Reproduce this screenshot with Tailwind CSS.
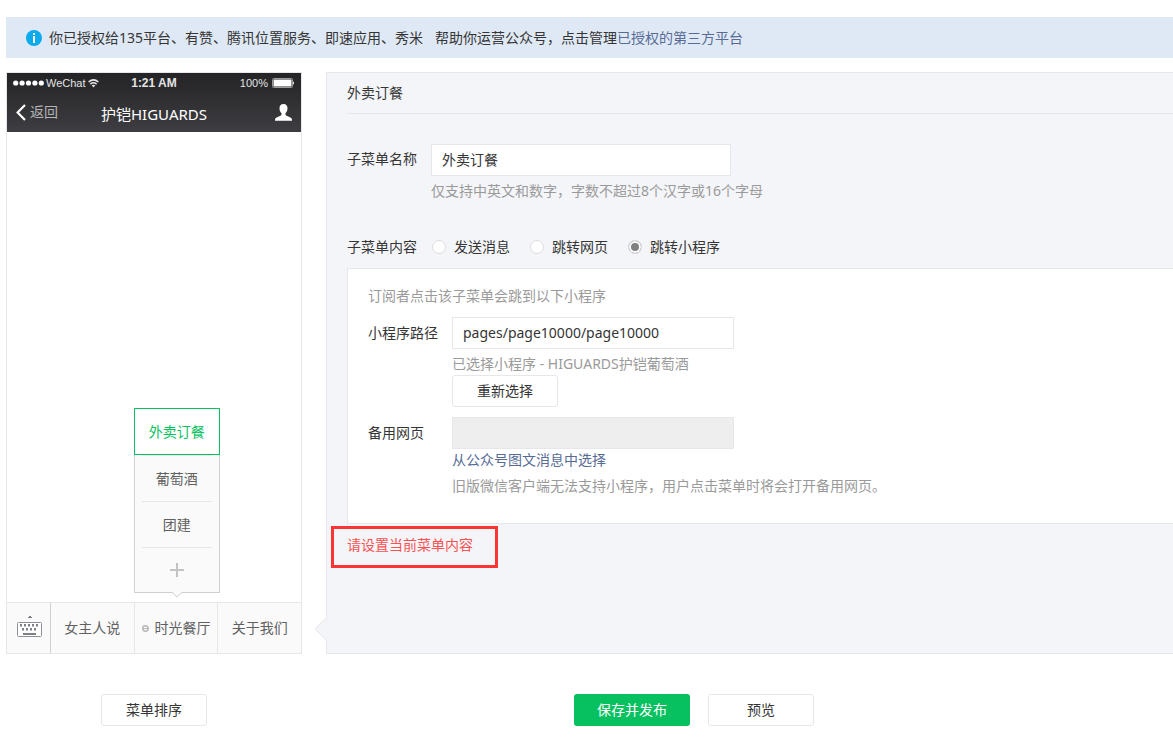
<!DOCTYPE html>
<html lang="zh-CN">
<head>
<meta charset="utf-8">
<meta name="viewport" content="width=device-width, initial-scale=1">
<title>自定义菜单</title>
<script src="https://cdn.jsdelivr.net/npm/@tailwindcss/browser@4"></script>
</head>
<body class="bg-white pt-[17px] pb-3 pl-1.5 overflow-x-hidden font-['Noto_Sans','Noto_Sans_CJK_SC',sans-serif] text-sm leading-5 text-[#353535]">

<div class="flex items-center bg-[#dfe9f5] h-[41px] pl-5 whitespace-nowrap">
  <svg class="size-4 shrink-0 mr-[7px]" viewBox="0 0 16 16" aria-hidden="true"><circle cx="8" cy="8" r="8" fill="#0cabee"/><path d="M7 3h2v2H7zM7 6h2v7H7z" fill="#fff"/></svg>
  <p>你已授权给135平台、有赞、腾讯位置服务、即速应用、秀米<span class="ml-3">帮助你运营公众号，点击管理</span><a href="#" class="text-[#576b95]">已授权的第三方平台</a></p>
</div>

<main class="mt-3.5 flex items-stretch min-h-[582px]">
  <!-- Phone preview -->
  <section class="w-[296px] shrink-0 flex flex-col border border-[#e7e7eb]">
    <header class="h-[59px] shrink-0 bg-linear-to-b from-[#242426] to-[#3e3e42] text-white">
      <div class="grid grid-cols-3 items-center h-5 px-1.5 text-[11px] leading-5 text-[#e4e4e4] font-['Liberation_Sans',sans-serif]">
        <div class="flex items-center gap-0.5">
          <svg class="w-[31px] h-[6px]" viewBox="0 0 31 6" fill="#fff" aria-hidden="true"><circle cx="2.700" cy="3" r="2.600"/><circle cx="9.100" cy="3" r="2.600"/><circle cx="15.500" cy="3" r="2.600"/><circle cx="21.900" cy="3" r="2.600"/><circle cx="28.300" cy="3" r="2.600"/></svg>
          <span>WeChat</span>
          <svg class="w-[11px] h-[9px]" viewBox="0 0 11 9" fill="none" stroke="#e8e8e8" stroke-width="1.500" aria-hidden="true"><path d="M.6 3Q5.500-1.200 10.400 3M2.400 5.100Q5.500 2.600 8.600 5.100"/><path d="M3.700 6.300Q5.500 5 7.300 6.300L5.500 8.600z" fill="#e8e8e8" stroke="none"/></svg>
        </div>
        <span class="text-center text-xs leading-5 font-bold">1:21 AM</span>
        <div class="flex items-center justify-end gap-1">
          <span>100%</span>
          <svg class="w-[23px] h-[10px]" viewBox="0 0 23 10" aria-hidden="true"><rect x=".5" y=".5" width="20" height="9" rx="1" fill="none" stroke="#999"/><path d="M1.500 1.500h18v7h-18zM21 3.200q2 1.800 0 3.600z" fill="#fff"/></svg>
        </div>
      </div>
      <div class="grid grid-cols-[60px_1fr_60px] items-center h-[38px] px-[9px]">
        <div class="flex items-center gap-1 text-[#b5b5b7]">
          <svg class="w-[10px] h-[17px]" viewBox="0 0 10 17" fill="none" stroke="#fff" stroke-width="2.200" aria-hidden="true"><path d="M9 1L1.600 8.500 9 16"/></svg>
          <span>返回</span>
        </div>
        <h1 class="text-center text-[15px] pt-1">护铠HIGUARDS</h1>
        <svg class="w-[17px] h-[17px] justify-self-end" viewBox="0 0 17 17" fill="#fff" aria-hidden="true"><path d="M8.500 0C5.900 0 4.300 1.900 4.500 4.500c.1 2.100.8 3.600 2 4.700.2 1.300-.1 2.100-1.100 2.600L1.600 13.600C.4 14.200 0 14.800 0 16.800h17c0-2-.4-2.600-1.600-3.200l-3.800-1.800c-1-.5-1.300-1.300-1.100-2.600 1.200-1.100 1.900-2.600 2-4.700C12.700 1.900 11.100 0 8.500 0z"/></svg>
      </div>
    </header>
    <div class="flex-1"></div>
    <nav class="flex h-[51px] shrink-0 border-t border-[#e7e7eb] bg-[#fafafa] text-[#616161]">
      <button type="button" aria-label="键盘" class="w-11 shrink-0 border-r border-[#d0d0d0] flex items-center justify-end pr-2 pb-1">
        <svg class="w-[25px] h-[21px]" viewBox="0 0 25 21" fill="#7d8088" aria-hidden="true"><path d="M11 1h1V0h2v1h1v1h-4z"/><rect x=".5" y="6.500" width="24" height="14" rx="1" fill="#fff" stroke="#8d9096"/><path d="M3 8h2v2.500H3zM7 8h2v2.500H7zM11 8h2v2.500h-2zM15 8h2v2.500h-2zM19 8h2v2.500h-2zM5 12h2v2.500H5zM9 12h2v2.500H9zM13 12h2v2.500h-2zM17 12h2v2.500h-2zM6 17h13v2H6z"/></svg>
      </button>
      <button type="button" class="flex-1">女主人说</button>
      <div class="relative flex-1 border-l border-[#e7e7eb] flex">
        <button type="button" class="flex-1 flex items-center justify-center gap-1.5">
          <svg class="size-[7px]" viewBox="0 0 7 7" fill="none" stroke="#b8b8b8" aria-hidden="true"><circle cx="3.500" cy="3.500" r="2.700" stroke-width="1.500"/><path d="M1 3.500h5"/></svg>
          <span>时光餐厅</span>
        </button>
        <ul class="absolute bottom-[calc(100%+10px)] -left-px w-[86px] border border-[#d0d0d0] bg-[#fafafa] text-center">
          <li class="-mx-px -mt-px h-[47px] flex border border-[#07c160] bg-white text-[#07c160]"><button type="button" class="flex-1">外卖订餐</button></li>
          <li class="mx-[7px] h-[46px] flex border-t border-[#e7e7eb]"><button type="button" class="flex-1">葡萄酒</button></li>
          <li class="mx-[7px] h-[46px] flex border-t border-[#e7e7eb]"><button type="button" class="flex-1">团建</button></li>
          <li class="mx-[7px] h-[45px] flex border-t border-[#e7e7eb]"><button type="button" aria-label="添加子菜单" class="flex-1 flex items-center justify-center"><svg class="size-3.5" viewBox="0 0 14 14" aria-hidden="true"><path d="M6 0h2v6h6v2H8v6H6V8H0V6h6z" fill="#c3c3c3"/></svg></button></li>
          <li class="absolute top-full left-1/2 -translate-x-1/2" aria-hidden="true"><svg class="w-3 h-1.5" viewBox="0 0 12 6"><path d="M0-1h12L6 5z" fill="#fafafa"/><path d="M.5 0L6 5l5.500-5" fill="none" stroke="#d0d0d0"/></svg></li>
        </ul>
      </div>
      <button type="button" class="flex-1 border-l border-[#e7e7eb]">关于我们</button>
    </nav>
  </section>

  <!-- Menu editor -->
  <section class="relative ml-6 flex-1 min-w-0 border border-r-0 border-[#e7e7eb] bg-[#f4f5f9] pl-5">
    <svg class="absolute -left-[13px] bottom-3 w-[13px] h-6" viewBox="0 0 13 24" aria-hidden="true"><path d="M13 0L1 12l12 12z" fill="#f4f5f9"/><path d="M13 0L1 12l12 12" fill="none" stroke="#e7e7eb"/></svg>
    <h2 class="h-[41px] border-b border-[#e7e7eb] leading-10">外卖订餐</h2>
    <form>
      <div class="flex mt-[30px]">
        <label for="name" class="w-21 shrink-0 leading-[30px]">子菜单名称</label>
        <div>
          <input id="name" type="text" value="外卖订餐" class="block w-[300px] h-8 border border-[#e7e7eb] bg-white px-2.5 pb-0.5">
          <p class="mt-[5px] text-[#9a9a9a]">仅支持中英文和数字，字数不超过8个汉字或16个字母</p>
        </div>
      </div>
      <fieldset class="flex items-center mt-9 h-5">
        <legend class="float-left w-[85px]">子菜单内容</legend>
        <div class="flex gap-5">
          <label class="flex items-center gap-2"><input type="radio" name="kind" class="appearance-none size-3.5 rounded-full border border-[#dcdce0] bg-white checked:bg-[#808080] checked:shadow-[inset_0_0_0_2px_#fff]">发送消息</label>
          <label class="flex items-center gap-2"><input type="radio" name="kind" class="appearance-none size-3.5 rounded-full border border-[#dcdce0] bg-white checked:bg-[#808080] checked:shadow-[inset_0_0_0_2px_#fff]">跳转网页</label>
          <label class="flex items-center gap-2"><input type="radio" name="kind" checked class="appearance-none size-3.5 rounded-full border border-[#dcdce0] bg-white checked:bg-[#808080] checked:shadow-[inset_0_0_0_2px_#fff]">跳转小程序</label>
        </div>
      </fieldset>
      <div class="mt-[11px] border border-r-0 border-[#e7e7eb] bg-white pl-5 pt-[17px] pb-[27px]">
        <p class="text-[#9a9a9a]">订阅者点击该子菜单会跳到以下小程序</p>
        <div class="flex mt-[11px]">
          <label for="path" class="w-21 shrink-0 leading-8">小程序路径</label>
          <div>
            <input id="path" type="text" value="pages/page10000/page10000" class="block w-[282px] h-8 border border-[#e7e7eb] bg-white px-2.5 pb-0.5">
            <p class="mt-[5px] text-[#9a9a9a]">已选择小程序 - HIGUARDS护铠葡萄酒</p>
            <button type="button" class="mt-px block w-[106px] h-8 rounded-[3px] border border-[#e7e7eb] bg-white">重新选择</button>
          </div>
        </div>
        <div class="flex mt-2.5">
          <label for="backup" class="w-21 shrink-0 leading-8">备用网页</label>
          <div>
            <input id="backup" type="text" disabled class="block w-[282px] h-8 border border-[#e7e7eb] bg-[#eeeeee] px-2.5">
            <a href="#" class="mt-px block text-[#576b95]">从公众号图文消息中选择</a>
            <p class="mt-1.5 text-[#9a9a9a]">旧版微信客户端无法支持小程序，用户点击菜单时将会打开备用网页。</p>
          </div>
        </div>
      </div>
      <p role="alert" class="-ml-4 mt-0.5 w-[167px] border-3 border-[#fa3534] px-[13px] pt-1.5 pb-2.5 text-[#fa5151]">请设置当前菜单内容</p>
    </form>
  </section>
</main>

<footer class="mt-10 flex">
  <div class="w-[296px] shrink-0 flex justify-center">
    <button type="button" class="w-[106px] h-8 rounded-[3px] border border-[#e7e7eb] bg-white">菜单排序</button>
  </div>
  <div class="ml-[272px] flex gap-[18px]">
    <button type="submit" class="w-[116px] h-8 rounded-[3px] bg-[#07c160] text-white">保存并发布</button>
    <button type="button" class="w-[106px] h-8 rounded-[3px] border border-[#e7e7eb] bg-white">预览</button>
  </div>
</footer>
</body>
</html>
